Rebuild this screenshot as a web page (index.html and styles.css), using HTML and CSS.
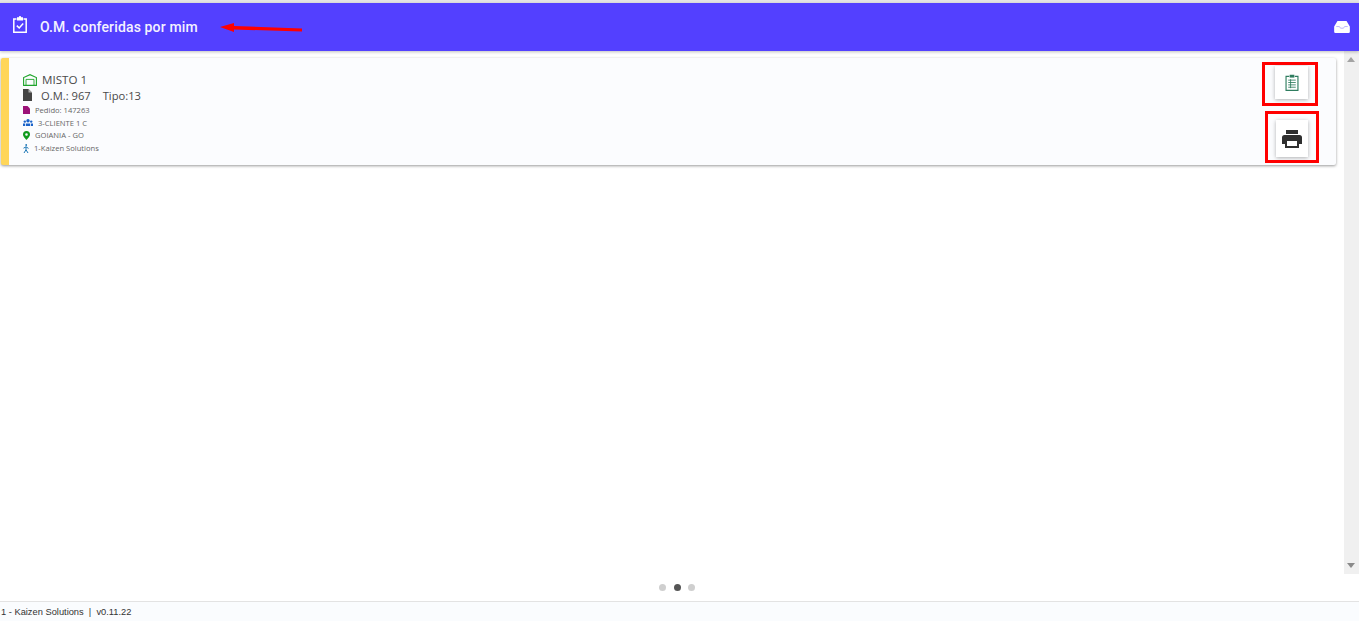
FILE: index.html
```html
<!DOCTYPE html>
<html lang="pt-BR">
<head>
  <meta charset="UTF-8" />
  <title>O.M. conferidas por mim</title>
  <link rel="stylesheet" href="styles.css">
</head>
<body>

<!-- Toolbar -->
<header class="toolbar">
  <div class="toolbar-left">
    <svg class="toolbar-icon" width="18" height="18" viewBox="0 0 18 18" fill="none" stroke="#fff" stroke-width="1.5">
      <path d="M5.5 3H2.8v13.2h12.4V3h-2.7"/>
      <path d="M6 1.2h1.8a1.2 1.2 0 0 1 2.4 0H12v3.3H6z" fill="#fff" stroke="none"/>
      <path d="M5.8 9.6l2.4 2.4 4-4.4"/>
    </svg>
    <h1>O.M. conferidas por mim</h1>
  </div>
  <svg class="inbox-icon" width="16" height="12" viewBox="0 0 17 13">
    <path d="M3.6 0h9.8L17 6v5.6A1.4 1.4 0 0 1 15.6 13H1.4A1.4 1.4 0 0 1 0 11.600V6z" fill="#fff"/>
    <path d="M2.300 6h3.400l1.200 1.800h3.200L11.300 6h3.400" fill="none" stroke="#b9b0ff" stroke-width="1"/>
  </svg>
</header>

<!-- Arrow drawn over the screenshot -->
<svg class="note-arrow" width="84" height="12" viewBox="0 0 84 12">
  <path d="M0 4L14 0V3L82 5.500V8.500L14 6.500V9z" fill="#f00"/>
</svg>

<main class="content">
  <div class="list">
    <div class="om-card">
      <div class="om-info">
        <div class="line line-title">
          <svg class="i-warehouse" width="14" height="12" viewBox="0 0 14 12" fill="none" stroke="#1fa52c" stroke-width="1.100">
            <path d="M.6 11.400V3.600L7 .7l6.400 2.900v7.800z"/>
            <path d="M3 11.400V5.400h8v6" stroke-width=".9"/>
          </svg>
          <span>MISTO 1</span>
        </div>
        <div class="line line-om">
          <svg width="9" height="12" viewBox="0 0 9 12"><path d="M0 0h5.500L9 3.500V12H0z" fill="#444"/><path d="M5.500 0v3.500H9z" fill="#aaa"/></svg>
          <span class="om-num">O.M.: 967</span>
          <span>Tipo:13</span>
        </div>
        <div class="line line-small gap-5">
          <svg width="7" height="8" viewBox="0 0 7 8"><path d="M0 0h4.500L7 2.500V8H0z" fill="#9b1278"/></svg>
          <span>Pedido: 147263</span>
        </div>
        <div class="line line-small gap-5">
          <svg width="10" height="7" viewBox="0 0 10 7" fill="#1a63c9"><circle cx="5" cy="1.800" r="1.700"/><circle cx="1.800" cy="2.600" r="1.200"/><circle cx="8.200" cy="2.600" r="1.200"/><path d="M2.800 7V4.500h4.400V7zM0 7V4.500h2V7zM8 7V4.500h2V7z"/></svg>
          <span>3-CLIENTE 1 C</span>
        </div>
        <div class="line line-small gap-5">
          <svg width="7" height="9" viewBox="0 0 7 9"><path fill-rule="evenodd" d="M3.500 0A3.500 3.500 0 0 1 7 3.500C7 5.800 3.500 9 3.500 9S0 5.800 0 3.500A3.500 3.500 0 0 1 3.500 0zm0 2.200a1.300 1.300 0 1 0 0 2.600 1.300 1.300 0 0 0 0-2.600z" fill="#0f9a1d"/></svg>
          <span>GOIANIA - GO</span>
        </div>
        <div class="line line-small gap-5">
          <svg width="6" height="9" viewBox="0 0 6 9" fill="none" stroke="#1b76b5" stroke-width="1"><circle cx="3.200" cy="1" r=".9" fill="#1b76b5" stroke="none"/><path d="M.5 4.200L3 2.800l2.500 1.600M3 2.800v3L1 9M3 5.800L5 9"/></svg>
          <span>1-Kaizen Solutions</span>
        </div>
      </div>
      <div class="om-actions">
        <button class="act-btn btn-list">
          <svg width="14" height="17" viewBox="0 0 14 18" fill="none" stroke="#2f7d5f" stroke-width="1.200">
            <path d="M4 2.500H.7v14.800h12.600V2.500H10"/>
            <path d="M4.500 .8h5v3h-5z" fill="#2f7d5f" stroke="none"/>
            <path d="M3 6.500h8M3 9h8M3 11.500h8M3 14h8M5.500 5.500V15" stroke-width=".9"/>
          </svg>
        </button>
        <button class="act-btn btn-print">
          <svg width="20" height="18" viewBox="0 0 20 18">
            <path d="M4 0h12v4H4z" fill="#2f2f2f"/>
            <path fill-rule="evenodd" d="M2.500 5h15A2.500 2.500 0 0 1 20 7.500V14h-3v4H3v-4H0V7.500A2.500 2.500 0 0 1 2.500 5zM5 11v5h10v-5z" fill="#2f2f2f"/>
          </svg>
        </button>
      </div>
    </div>
  </div>

  <div class="scrollbar">
    <span class="arrow-up"></span>
    <span class="arrow-down"></span>
  </div>
</main>

<div class="dots">
  <span class="dot"></span>
  <span class="dot dot-active"></span>
  <span class="dot"></span>
</div>

<footer class="footer">1 - Kaizen Solutions &nbsp;|&nbsp; v0.11.22</footer>

<!-- Red boxes drawn over the screenshot -->
<div class="note-box note-box-1"></div>
<div class="note-box note-box-2"></div>

</body>
</html>
```

FILE: styles.css
```css
html, body {
  height: 100%;
}

body {
  margin: 0;
  padding-top: 3px;
  box-sizing: border-box;
  background: #fff;
  font-family: "Open Sans", sans-serif;
  color: #444;
  display: flex;
  flex-direction: column;
  overflow: hidden;
  position: relative;
}

body::before {
  content: "";
  position: absolute;
  top: 0;
  left: 0;
  right: 0;
  height: 3px;
  background: #e4e4e4;
}

.toolbar {
  height: 48px;
  flex: none;
  background: #5340ff;
  color: #f4f2ff;
  display: flex;
  justify-content: space-between;
  align-items: center;
  padding: 0 3px 0 11px;
  box-shadow: 0 1px 3px rgba(0,0,0,0.25);
  z-index: 1;
}

.toolbar-left {
  display: flex;
  align-items: center;
  gap: 11px;
}

.toolbar-icon {
  margin-top: -4px;
}

.toolbar h1 {
  margin: 0;
  font-family: Roboto, sans-serif;
  font-size: 14px;
  font-weight: 500;
  letter-spacing: 0.14px;
}

.inbox-icon {
  margin-right: 6px;
}

.content {
  height: 523px;
  flex: none;
  display: flex;
}

.list {
  flex: 1;
  padding: 7px 8px 0 1px;
}

.om-card {
  height: 107px;
  box-sizing: border-box;
  background: #fbfcfe;
  border-left: 8px solid #ffd659;
  border-radius: 2px;
  box-shadow: 0 1px 3px rgba(0,0,0,0.4);
  display: flex;
  justify-content: space-between;
  padding: 14px 28px 0 14px;
}

.line {
  display: flex;
  align-items: center;
}

.line-title {
  height: 15px;
  font-size: 11.6px;
  gap: 5px;
  color: #4a4a4a;
}

.line-om {
  height: 16px;
  font-size: 11.2px;
  gap: 9px;
  color: #4a4a4a;
}

.om-num {
  margin-right: 3px;
}

.line-small {
  height: 12.6px;
  font-size: 7.6px;
  color: #666;
}

.line-om + .line-small {
  margin-top: 1px;
}

.gap-5 { gap: 5px; }

.om-actions {
  display: flex;
  flex-direction: column;
  align-items: flex-end;
  margin-top: -6px;
  gap: 21px;
}

.act-btn {
  width: 33px;
  height: 33px;
  padding: 0;
  border: none;
  background: #fff;
  display: flex;
  align-items: center;
  justify-content: center;
  box-shadow: 0 1px 4px rgba(0,0,0,0.3);
}

.btn-print {
  width: 32px;
  height: 37px;
}

.scrollbar {
  width: 15px;
  flex: none;
  background: #f0f0f0;
  position: relative;
}

.arrow-up, .arrow-down {
  position: absolute;
  left: 3px;
  width: 0;
  height: 0;
  border-left: 4px solid transparent;
  border-right: 4px solid transparent;
}

.arrow-up {
  top: 6px;
  border-bottom: 5px solid #a3a3a3;
}

.arrow-down {
  bottom: 6px;
  border-top: 5px solid #8a8a8a;
}

.dots {
  flex: 1;
  display: flex;
  justify-content: center;
  align-items: center;
  gap: 7.5px;
  margin-right: 5px;
}

.dot {
  width: 7px;
  height: 7px;
  border-radius: 50%;
  background: #cfcfcf;
}

.dot-active {
  background: #555;
}

.footer {
  height: 20px;
  flex: none;
  box-sizing: border-box;
  border-top: 1px solid #e3e3e3;
  background: #fafcfe;
  font-family: "Liberation Sans", sans-serif;
  font-size: 9.3px;
  color: #333;
  padding: 5px 0 0 1px;
}

.note-arrow {
  position: absolute;
  left: 220px;
  top: 23px;
  z-index: 2;
}

.note-box {
  position: absolute;
  border: 3px solid #f00;
  box-sizing: border-box;
  z-index: 2;
}

.note-box-1 {
  left: 1262px;
  top: 62px;
  width: 56px;
  height: 44px;
}

.note-box-2 {
  left: 1265px;
  top: 111px;
  width: 54px;
  height: 52px;
}
```
